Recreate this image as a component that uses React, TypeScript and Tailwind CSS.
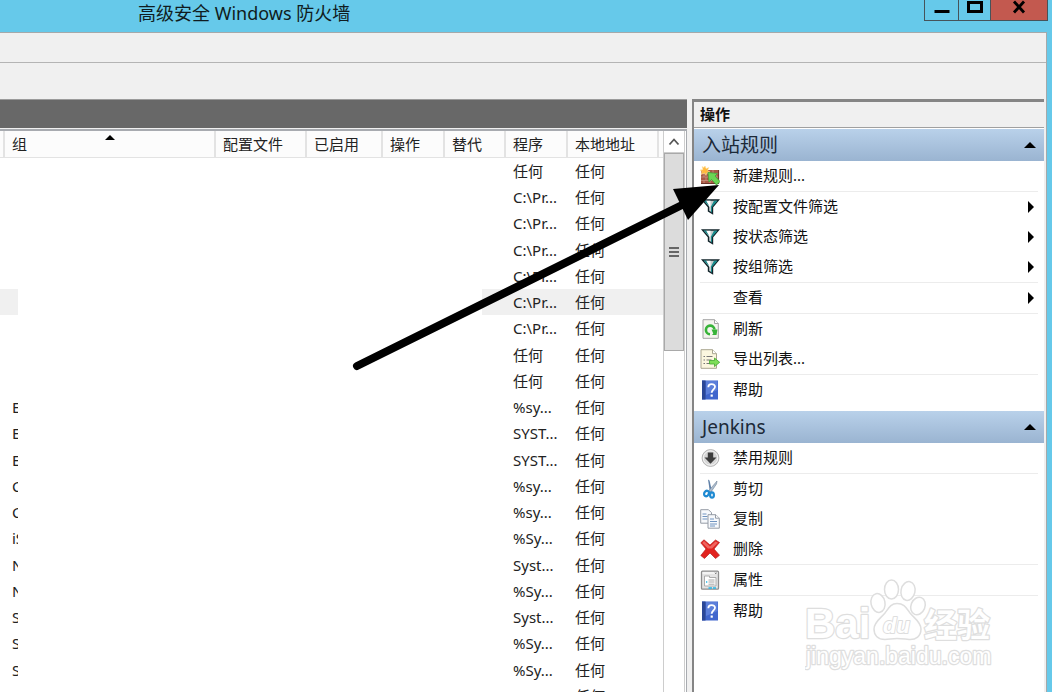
import React from 'react';
import { clsx } from 'clsx';

type IconType = React.FC;

interface Action {
  label: string;
  icon?: IconType;
  submenu?: boolean;
  divider?: boolean;
}

const NewRuleIcon: IconType = () => (
  <svg viewBox="0 0 20 20" className="h-5 w-5">
    <rect x="1" y="4" width="18" height="14" fill="#a85a45" />
    <path d="M1 7.500h18M1 11h18M1 14.500h18M6 4v3.500M13 4v3.500M4 7.500v3.500M10 7.500v3.500M16 7.500v3.500M6 11v3.500M13 11v3.500M4 14.500v3.500M10 14.500v3.500" stroke="#cf9c8a" strokeWidth=".7" />
    <path d="M1 17.500h18M18.600 4v14" stroke="#6d3529" strokeWidth="1" />
    <path d="M5 -.5l1 3 3-1-1.500 3 2.500 1.500-3 .5L6 9.500 4.500 7 1 8.500l1-3L0 4l3-.5L2 .5l2 1z" fill="#ffb93c" stroke="#ffe7b0" strokeWidth=".5" />
    <path d="M8 6.500l9.500 1-2.500 2.500 5 5.500-3.500 3.500-5-5.500L9 16z" fill="#6bd653" stroke="#3fa33a" strokeWidth=".8" />
  </svg>
);

const FilterIcon: IconType = () => (
  <svg viewBox="0 0 20 20" className="h-5 w-5">
    <path d="M2.500 3h16l-6 7v6.500l-4-2.500v-4z" fill="#c7cccd" stroke="#12242a" strokeWidth="1.400" />
    <path d="M14 3.800h3.500L12 10v5.500l-1-.5V9.500z" fill="#168b8b" />
    <path d="M6 3.800h4.500L10.500 9l-1 1z" fill="#fff" />
    <path d="M3.500 3.600h2.500l3.500 6z" fill="#168b8b" />
  </svg>
);

const RefreshIcon: IconType = () => (
  <svg viewBox="0 0 20 20" className="h-5 w-5">
    <path d="M3 .7h11.500l3.800 3.800v14.800H3z" fill="#f4f4ee" stroke="#a3a3a3" />
    <path d="M14.500.7v3.800h3.800" fill="#fff" stroke="#a3a3a3" />
    <path d="M10 15.200a4.300 4.300 0 1 1 4.500-4.700" fill="none" stroke="#37b338" strokeWidth="2.600" />
    <path d="M11.500 10.500h6l-1 5.500h-4.500l1.300-1.500z" fill="#37b338" />
  </svg>
);

const ExportIcon: IconType = () => (
  <svg viewBox="0 0 20 20" className="h-5 w-5">
    <path d="M1 .7h11.500l4 4v14.600H1z" fill="#fbf7df" stroke="#a9a68f" />
    <path d="M12.500.7v4h4" fill="#fff" stroke="#a9a68f" />
    <path d="M3.500 7.500h1.500M3.500 11h1.500M3.500 14.500h1.500M6.500 7.500h6M6.500 11h5M6.500 14.500h5" stroke="#777" strokeWidth="1.200" />
    <path d="M9.500 11.500h5V9l5.200 4.300-5.200 4.300V15h-5z" fill="#7ede58" stroke="#42a82e" strokeWidth=".8" />
  </svg>
);

const HelpIcon: IconType = () => (
  <svg viewBox="0 0 20 20" className="h-5 w-5">
    <rect x="2" y=".5" width="16" height="19" fill="#4066cd" />
    <rect x="2" y=".5" width="3.500" height="19" fill="#2b4796" />
    <path d="M6 1h11.500v9L6 15z" fill="#6f90e2" opacity=".6" />
    <path d="M8.300 7.200c0-4 6.700-4 6.700-.4 0 2.500-3.300 2.900-3.300 6" fill="none" stroke="#fff" strokeWidth="1.800" />
    <rect x="10.600" y="14.500" width="2.200" height="2.200" fill="#fff" />
  </svg>
);

const DisableIcon: IconType = () => (
  <svg viewBox="0 0 20 20" className="h-5 w-5">
    <circle cx="10.500" cy="10" r="8.400" fill="#d6d6d6" stroke="#b4b4b4" />
    <circle cx="10.500" cy="10" r="7.200" fill="none" stroke="#f5f5f5" />
    <path d="M7.800 4.500h5.400v5h3.300l-6 6.300-6-6.300h3.300z" fill="#3d3d3d" />
  </svg>
);

const CutIcon: IconType = () => (
  <svg viewBox="0 0 20 20" className="h-5 w-5">
    <path d="M8 .5l1.500 1 2.500 10.500-2 1.500z" fill="#5f80a8" />
    <path d="M17 2l-.5 3-5.500 8-2.500-1z" fill="#adbccd" stroke="#6e8399" strokeWidth=".6" />
    <ellipse cx="6.500" cy="14.500" rx="2.200" ry="2.800" transform="rotate(35 6.500 14.500)" fill="none" stroke="#1f8ad2" strokeWidth="2.200" />
    <ellipse cx="12" cy="16" rx="1.900" ry="2.700" fill="none" stroke="#1f8ad2" strokeWidth="2.200" />
  </svg>
);

const CopyIcon: IconType = () => (
  <svg viewBox="0 0 20 20" className="h-5 w-5">
    <path d="M.7.700h7.800l3 3v10.500H.7z" fill="#f7f9fc" stroke="#959ca6" />
    <path d="M2.500 5h4M2.500 7.500h5M2.500 10h5" stroke="#7094c0" />
    <path d="M8 5.700h7.800l3.500 3.500v10H8z" fill="#f7f9fc" stroke="#959ca6" />
    <path d="M15.500 5.700v3.500h3.800" fill="#fff" stroke="#959ca6" />
    <path d="M10 10h4M10 12.500h7M10 15h7M10 17h5" stroke="#7094c0" />
  </svg>
);

const DeleteIcon: IconType = () => (
  <svg viewBox="0 0 20 20" className="h-5 w-5">
    <path d="M4 .8l6 5.200 5.500-5 4 2.500L14 10l5.500 6.300-4 3.200-5.500-5.500-5.500 5.500L.8 16.500 6 10 .8 3.800z" fill="#e2231f" stroke="#b52222" strokeWidth=".7" strokeLinejoin="round" />
    <path d="M4 2l6 5.500 5.500-5 2.500 1.300L12 9.500H8L2.300 4z" fill="#f5817c" opacity=".7" />
  </svg>
);

const PropertiesIcon: IconType = () => (
  <svg viewBox="0 0 20 20" className="h-5 w-5">
    <rect x="1.500" y="1.200" width="17" height="18" rx="1" fill="#e4e4e4" stroke="#8d8d8d" strokeWidth="1.300" />
    <path d="M2.500 3h15" stroke="#fafafa" strokeWidth="1.500" />
    <path d="M15 2.500l1.500 1.500M16.500 2.500l-1.500 1.500" stroke="#666" strokeWidth=".7" />
    <path d="M4.500 6h5v1.500h6.500v8.500H4.500z" fill="#fff" stroke="#ababab" />
    <path d="M8.500 10h6M8.500 12h6M8.500 14.200h6" stroke="#a5a5a5" />
    <path d="M6 12h1.300M8.500 18h3.500M13 18h3" stroke="#22b5e6" strokeWidth="1.300" />
  </svg>
);

const inboundActions: Action[] = [
  { label: '新建规则...', icon: NewRuleIcon },
  { label: '按配置文件筛选', icon: FilterIcon, submenu: true, divider: true },
  { label: '按状态筛选', icon: FilterIcon, submenu: true },
  { label: '按组筛选', icon: FilterIcon, submenu: true },
  { label: '查看', submenu: true, divider: true },
  { label: '刷新', icon: RefreshIcon, divider: true },
  { label: '导出列表...', icon: ExportIcon },
  { label: '帮助', icon: HelpIcon, divider: true },
];

const ruleActions: Action[] = [
  { label: '禁用规则', icon: DisableIcon },
  { label: '剪切', icon: CutIcon, divider: true },
  { label: '复制', icon: CopyIcon },
  { label: '删除', icon: DeleteIcon },
  { label: '属性', icon: PropertiesIcon, divider: true },
  { label: '帮助', icon: HelpIcon, divider: true },
];

const columns = [
  { name: '', width: 'w-[5px]' },
  { name: '组', width: '' },
  { name: '配置文件', width: 'w-[91px]' },
  { name: '已启用', width: 'w-[76px]' },
  { name: '操作', width: 'w-[62px]' },
  { name: '替代', width: 'w-[61px]' },
  { name: '程序', width: 'w-[62px]' },
  { name: '本地地址', width: 'w-[91px]' },
  { name: '', width: 'w-[4px]' },
];

const rules = [
  { group: '', program: '任何' },
  { group: '', program: 'C:\\Pr...' },
  { group: '', program: 'C:\\Pr...' },
  { group: '', program: 'C:\\Pr...' },
  { group: '', program: 'C:\\Pr...' },
  { group: '', program: 'C:\\Pr...', selected: true },
  { group: '', program: 'C:\\Pr...' },
  { group: '', program: '任何' },
  { group: '', program: '任何' },
  { group: 'E', program: '%sy...' },
  { group: 'E', program: 'SYST...' },
  { group: 'E', program: 'SYST...' },
  { group: 'C', program: '%sy...' },
  { group: 'C', program: '%sy...' },
  { group: 'iS', program: '%Sy...' },
  { group: 'N', program: 'Syst...' },
  { group: 'N', program: '%Sy...' },
  { group: 'S', program: 'Syst...' },
  { group: 'S', program: '%Sy...' },
  { group: 'S', program: '%Sy...' },
  { group: 'T', program: '%Sy...' },
];

const TitleBar: React.FC = () => (
  <header className="flex h-8 shrink-0 items-start bg-[#66c9ea] pr-1">
    <h1 className="flex-1 pl-[138px] text-[18px] leading-[27px] text-[#101c20]">高级安全 Windows 防火墙</h1>
    <div className="flex h-[21px] border-b border-l border-[#46535a]">
      <button aria-label="最小化" className="flex w-[34px] justify-center border-r border-[#46535a]">
        <svg viewBox="0 0 16 16" className="h-4 w-4"><path d="M.5 11.500h15" stroke="#000" strokeWidth="3" /></svg>
      </button>
      <button aria-label="最大化" className="flex w-8 justify-center border-r border-[#46535a]">
        <svg viewBox="0 0 16 16" className="h-4 w-4"><path d="M1.500 2.500h13v9h-13z" fill="none" stroke="#000" strokeWidth="3" /></svg>
      </button>
      <button aria-label="关闭" className="flex w-[57px] justify-center border-r border-[#46535a] bg-[#c3594f]">
        <svg viewBox="0 0 16 16" className="h-4 w-4"><path d="M3 1.500l10 11M13 1.500L3 12.500" stroke="#000" strokeWidth="2.800" /></svg>
      </button>
    </div>
  </header>
);

const RuleTable: React.FC = () => (
  <table className="w-full table-fixed border-separate border-spacing-0 text-left text-[15px] text-[#222]">
    <thead>
      <tr className="h-[27px]">
        {columns.map((col, i) => (
          <th
            key={i}
            className={clsx(
              'border-b border-[#e3e3e3] bg-[#fcfcfc] p-0 font-normal leading-[26px] whitespace-nowrap',
              col.width,
              i < columns.length - 1 && 'border-r-2'
            )}
          >
            {col.name && (
              <div className="relative pl-[7px]">
                {col.name}
                {col.name === '组' && (
                  <svg viewBox="0 0 10 5" className="absolute top-1 left-[100px] h-[5px] w-[10px]"><path d="M0 5L5 0l5 5z" fill="#000" /></svg>
                )}
              </div>
            )}
          </th>
        ))}
      </tr>
    </thead>
    <tbody>
      {rules.map((rule, i) => {
        const shade = rule.selected && 'bg-[#f0f0f0]';
        return (
          <tr key={i} className="h-[26px] leading-[26px] whitespace-nowrap [&:nth-child(4n)]:h-[27px] [&>td]:p-0">
            <td className={clsx(shade)} />
            <td>
              <div className={clsx('h-[26px] w-[13px] overflow-hidden pl-[7px]', shade)}>{rule.group}</div>
            </td>
            <td />
            <td />
            <td />
            <td>
              <div className={clsx('ml-auto h-[26px] w-6', shade)} />
            </td>
            <td className={clsx(shade)}><div className="pl-[7px]">{rule.program}</div></td>
            <td className={clsx(shade)}><div className="pl-[7px]">任何</div></td>
            <td className={clsx(shade)} />
          </tr>
        );
      })}
    </tbody>
  </table>
);

const ScrollBar: React.FC = () => (
  <div className="flex w-[22px] shrink-0 flex-col border-x border-[#cdcdcd] bg-white">
    <button aria-label="向上滚动" className="flex h-[22px] items-center justify-center border-b border-[#cdcdcd]">
      <svg viewBox="0 0 12 12" className="h-3 w-3"><path d="M1.500 8.500L6 3.500l4.500 5" fill="none" stroke="#555" strokeWidth="1.800" /></svg>
    </button>
    <div className="flex h-[198px] items-center justify-center border border-[#a9a9a9] bg-[#dcdcdc]">
      <svg viewBox="0 0 10 10" className="h-[10px] w-[10px]"><path d="M0 1h10M0 5h10M0 9h10" stroke="#666" strokeWidth="2" /></svg>
    </div>
  </div>
);

const ActionGroup: React.FC<{ title: string; actions: Action[] }> = ({ title, actions }) => (
  <section>
    <button className="flex h-8 w-full items-center justify-between bg-linear-to-b from-[#b9d1ea] to-[#9ab4d1] pr-2 pl-2 text-[19px] text-[#1c2938]">
      <h3>{title}</h3>
      <svg viewBox="0 0 12 6" className="h-[6px] w-3"><path d="M0 6l6-6 6 6z" fill="#000" /></svg>
    </button>
    <ul className="pr-[6px] pl-[6px]">
      {actions.map((action, i) => (
        <li key={i} className={clsx(action.divider && 'border-t border-[#ececec]')}>
          <button className="flex h-[30px] w-full items-center text-left text-[15px] leading-[28px] text-[#111]">
            <span className="mr-[13px] w-5">{action.icon && <action.icon />}</span>
            <span className="h-[30px] flex-1">{action.label}</span>
            {action.submenu && (
              <svg viewBox="0 0 6 12" className="mr-1 h-3 w-[6px]"><path d="M0 0l6 6-6 6z" fill="#000" /></svg>
            )}
          </button>
        </li>
      ))}
    </ul>
  </section>
);

const Watermark: React.FC = () => (
  <svg viewBox="0 0 190 94" className="pointer-events-none absolute right-[57px] bottom-[20px] h-[94px] w-[190px]" fill="#fff" stroke="#dedede" strokeWidth="1.500" strokeLinejoin="round">
    <text x="0" y="60" fontFamily="Liberation Sans, sans-serif" fontWeight="700" fontSize="42" paintOrder="stroke" strokeWidth="2.500">Bai</text>
    <ellipse cx="73" cy="25" rx="7" ry="9.500" transform="rotate(-12 73 25)" />
    <ellipse cx="86.500" cy="11.500" rx="7" ry="9.500" />
    <ellipse cx="103" cy="13" rx="7" ry="9.500" transform="rotate(12 103 13)" />
    <ellipse cx="113" cy="28" rx="7" ry="9" transform="rotate(22 113 28)" />
    <path d="M92 25.500c7 0 9 4 13 9.500 4 5 11 9 11 16 0 7-5 11-12 10.500-5-.5-7-1-12-1s-8 1-12 1c-7 0-11-4-11-10.500 0-7 7-11 11-16 4-5.500 6-9.500 12-9.500z" />
    <text x="78" y="55" fontFamily="Liberation Sans, sans-serif" fontWeight="700" fontStyle="italic" fontSize="22" paintOrder="stroke" strokeWidth="2">du</text>
    <text x="119" y="59" fontFamily="Noto Sans CJK SC, sans-serif" fontWeight="700" fontSize="33" paintOrder="stroke" strokeWidth="2.500">经验</text>
    <text x="1" y="86" fontFamily="Liberation Sans, sans-serif" fontSize="23" paintOrder="stroke" strokeWidth="2.500">jingyan.baidu.com</text>
  </svg>
);

const App: React.FC = () => (
  <div lang="zh-CN" className="relative flex h-screen flex-col overflow-hidden bg-[#66c9ea] font-['Noto_Sans','Noto_Sans_CJK_SC',sans-serif]">
    <TitleBar />
    <div className="mr-[5px] flex min-h-0 flex-1 flex-col border-t border-r border-[#a5a9aa] bg-[#f0f0f0]">
      <div className="h-[30px] shrink-0 border-b border-[#b4b4b4]" />
      <div className="h-9 shrink-0" />
      <div className="flex min-h-0 flex-1 pr-[2px]">
        <main className="flex min-w-0 flex-1 flex-col">
          <div className="h-[29px] shrink-0 border-t border-[#9b9b9b] bg-[#686868]" />
          <div className="mt-px flex min-h-0 flex-1 border-t-2 border-r border-[#a8abb0] bg-white pr-px">
            <div className="min-w-0 flex-1 overflow-hidden">
              <RuleTable />
            </div>
            <ScrollBar />
          </div>
        </main>
        <aside className="relative ml-[5px] flex w-[352px] shrink-0 flex-col border-t-3 border-l-2 border-[#858585] bg-white">
          <h2 className="mb-px h-[26px] shrink-0 border-b border-[#a0a0a0] bg-[#f0f0f0] pl-[6px] text-[15px] leading-[25px] font-bold text-[#111]">操作</h2>
          <div className="flex flex-col gap-[6px]">
            <ActionGroup title="入站规则" actions={inboundActions} />
            <ActionGroup title="Jenkins" actions={ruleActions} />
          </div>
        </aside>
      </div>
    </div>
    <Watermark />
    {/* pointer to the "new rule" entry */}
    <svg viewBox="0 0 366 190" className="pointer-events-none absolute top-[182px] right-[332px] h-[190px] w-[366px] overflow-visible">
      <path d="M3 184L330 22" stroke="#000" strokeWidth="8" strokeLinecap="round" />
      <path d="M319 7l46-4-31 35z" fill="#000" />
    </svg>
  </div>
);

export default App;
